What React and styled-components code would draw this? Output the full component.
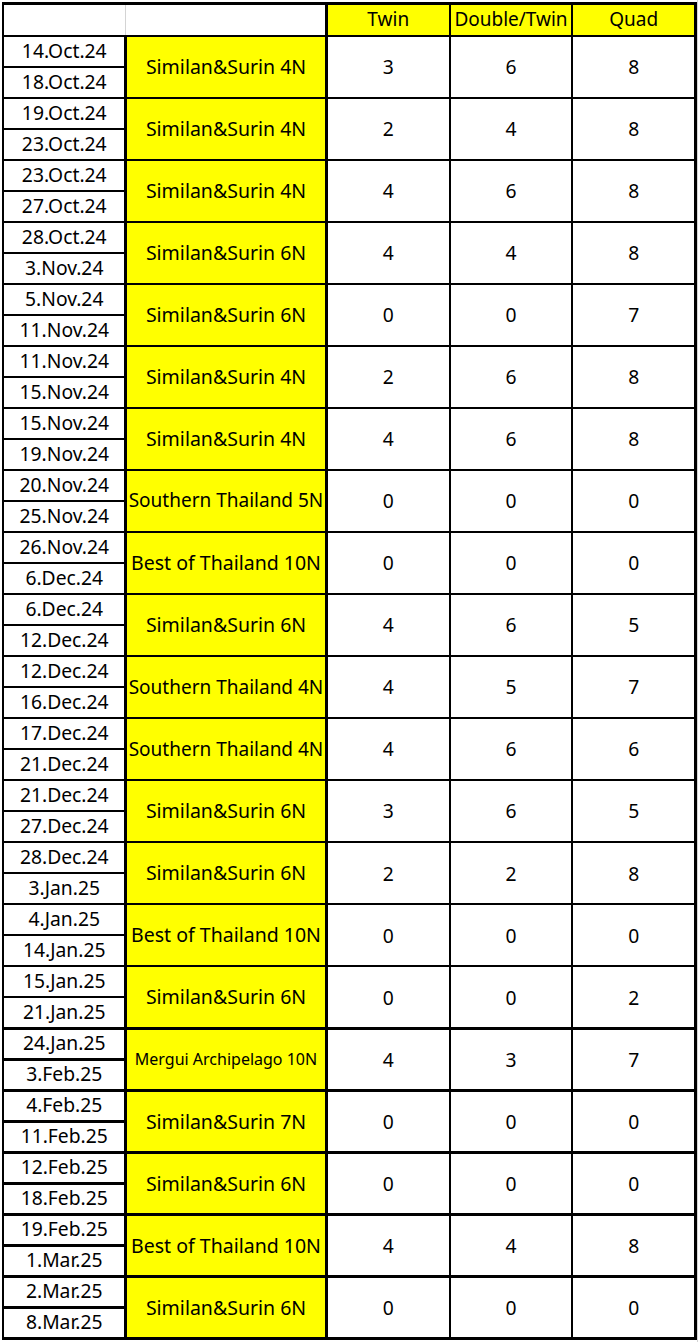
import React from "react";
import styled, { createGlobalStyle } from "styled-components";

const GlobalStyle = createGlobalStyle`
  html, body { margin: 0; padding: 0; background: #fff; }
  body { font-family: "Noto Sans", "Open Sans", sans-serif; color: #000; }
`;

const Sheet = styled.div`
  padding: 2px 0 0 1.75px;
  width: 700px;
  height: 1342px;
  box-sizing: border-box;
  overflow: hidden;
  background-image: linear-gradient(to right, transparent 697px, #d4d4d4 697px, #d4d4d4 698px, transparent 698px);
`;

const Table = styled.div`
  display: grid;
  grid-template-columns: 120px 198.5px 121px 119.5px 121px;
  grid-template-rows: 30px repeat(42, 28.52px);
  gap: 2.5px;
  padding: 2.5px;
  background: #000;
  width: max-content;
`;

const HeadBlank = styled.div`
  grid-column: span 2;
  display: grid;
  grid-template-columns: 121.5px 1fr;
  background: #fff;
`;

const BlankPart = styled.div`
  border-right: ${(p) => (p.$divider ? "1px solid #d4d4d4" : "none")};
`;

const Cell = styled.div`
  display: flex;
  align-items: center;
  justify-content: center;
  white-space: nowrap;
  overflow: hidden;
  font-size: 19.3px;
  line-height: 1;
`;

const HeadCell = styled(Cell)`
  background: #ffff00;
  font-size: 19px;
`;

const DateCell = styled(Cell)`
  background: #fff;
  padding-bottom: 2px;
`;

const TourCell = styled(Cell)`
  grid-row: span 2;
  background: #ffff00;
  font-size: ${(p) => p.$size}px;
`;

const NumCell = styled(Cell)`
  grid-row: span 2;
  background: #fff;
`;

const rows = [
  ["14.Oct.24", "18.Oct.24", "Similan&Surin 4N", 3, 6, 8],
  ["19.Oct.24", "23.Oct.24", "Similan&Surin 4N", 2, 4, 8],
  ["23.Oct.24", "27.Oct.24", "Similan&Surin 4N", 4, 6, 8],
  ["28.Oct.24", "3.Nov.24", "Similan&Surin 6N", 4, 4, 8],
  ["5.Nov.24", "11.Nov.24", "Similan&Surin 6N", 0, 0, 7],
  ["11.Nov.24", "15.Nov.24", "Similan&Surin 4N", 2, 6, 8],
  ["15.Nov.24", "19.Nov.24", "Similan&Surin 4N", 4, 6, 8],
  ["20.Nov.24", "25.Nov.24", "Southern Thailand 5N", 0, 0, 0],
  ["26.Nov.24", "6.Dec.24", "Best of Thailand 10N", 0, 0, 0],
  ["6.Dec.24", "12.Dec.24", "Similan&Surin 6N", 4, 6, 5],
  ["12.Dec.24", "16.Dec.24", "Southern Thailand 4N", 4, 5, 7],
  ["17.Dec.24", "21.Dec.24", "Southern Thailand 4N", 4, 6, 6],
  ["21.Dec.24", "27.Dec.24", "Similan&Surin 6N", 3, 6, 5],
  ["28.Dec.24", "3.Jan.25", "Similan&Surin 6N", 2, 2, 8],
  ["4.Jan.25", "14.Jan.25", "Best of Thailand 10N", 0, 0, 0],
  ["15.Jan.25", "21.Jan.25", "Similan&Surin 6N", 0, 0, 2],
  ["24.Jan.25", "3.Feb.25", "Mergui Archipelago 10N", 4, 3, 7],
  ["4.Feb.25", "11.Feb.25", "Similan&Surin 7N", 0, 0, 0],
  ["12.Feb.25", "18.Feb.25", "Similan&Surin 6N", 0, 0, 0],
  ["19.Feb.25", "1.Mar.25", "Best of Thailand 10N", 4, 4, 8],
  ["2.Mar.25", "8.Mar.25", "Similan&Surin 6N", 0, 0, 0],
];

const tourSize = (t) => {
  if (t.startsWith("Mergui")) return 16;
  if (t.startsWith("Southern")) return 19;
  return 19.5;
};

export default function App() {
  return (
    <>
      <GlobalStyle />
      <Sheet>
        <Table>
          <HeadBlank>
            <BlankPart $divider />
            <BlankPart />
          </HeadBlank>
          <HeadCell>Twin</HeadCell>
          <HeadCell>Double/Twin</HeadCell>
          <HeadCell>Quad</HeadCell>
          {rows.map(([from, to, tour, twin, dbl, quad], i) => (
            <React.Fragment key={i}>
              <DateCell>{from}</DateCell>
              <TourCell $size={tourSize(tour)}>{tour}</TourCell>
              <NumCell>{twin}</NumCell>
              <NumCell>{dbl}</NumCell>
              <NumCell>{quad}</NumCell>
              <DateCell>{to}</DateCell>
            </React.Fragment>
          ))}
        </Table>
      </Sheet>
    </>
  );
}
